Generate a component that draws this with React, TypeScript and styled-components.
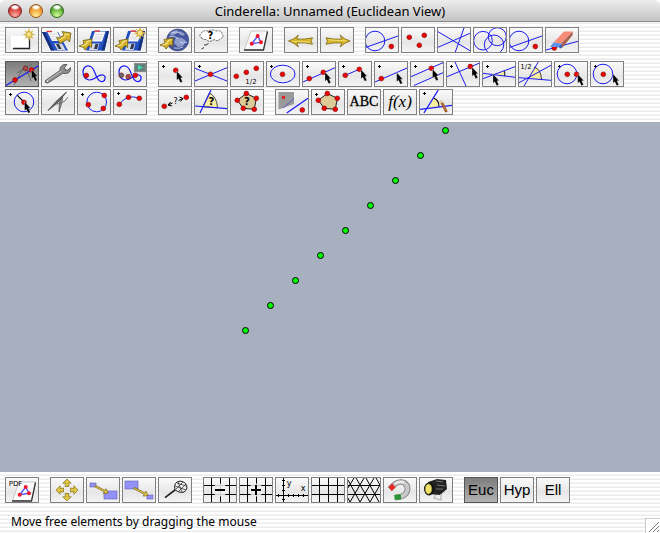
import React from "react";
import styled, { createGlobalStyle, css } from "styled-components";

const GlobalStyle = createGlobalStyle`
  * { box-sizing: border-box; }
  body {
    margin: 0;
    background: #fff;
    color: #000;
    font-family: "Noto Sans", "Open Sans", sans-serif;
  }
`;

const Window = styled.div`
  display: flex;
  flex-direction: column;
  min-height: 100vh;
  background: repeating-linear-gradient(#fff 0 2px, #f4f4f4 2px 3px, #ececec 3px 4px);
`;

const TitleBar = styled.header`
  display: grid;
  grid-template-columns: 1fr auto 1fr;
  align-items: center;
  height: 22px;
  padding: 0 8px;
  border-bottom: 1px solid #8a8a8a;
  border-radius: 6px 6px 0 0;
  background: linear-gradient(#ededed, #c4c4c4);
`;

const Title = styled.h1`
  margin: 0;
  font-size: 13px;
  font-weight: 400;
  line-height: 20px;
  white-space: nowrap;
`;

const Lights = styled.div`
  display: flex;
  gap: 7px;
`;

const Light = styled.button<{ $edge: string; $mid: string; $glow: string }>`
  width: 14px;
  height: 14px;
  padding: 0;
  border: 1px solid ${(p) => p.$edge};
  border-radius: 50%;
  background:
    radial-gradient(ellipse 5px 3px at 50% 18%, #ffff 0 40%, transparent),
    radial-gradient(circle at 50% 90%, ${(p) => p.$glow} 0, ${(p) => p.$mid} 60%, ${(p) => p.$edge} 100%);
`;

const ToolArea = styled.div`
  display: flex;
  flex-direction: column;
  gap: 8px;
  padding: 5px 5px 7px;
`;

const ViewArea = styled(ToolArea)`
  padding-bottom: 8px;
`;

const Rows = styled.div`
  display: flex;
  flex-direction: column;
  gap: 2px;
`;

const ToolRow = styled.div`
  display: flex;
  flex-wrap: wrap;
  gap: 2px 11px;
`;

const Group = styled.div`
  display: flex;
  flex-wrap: wrap;
  gap: 2px;
`;

const Tool = styled.button<{ $on?: boolean }>`
  display: flex;
  align-items: center;
  justify-content: center;
  width: 34px;
  height: 26px;
  padding: 0;
  border: 1px solid #808080;
  overflow: hidden;
  background: linear-gradient(#fafafa, #e6e6e6 60%, #f4f4f4);
  color: #000;
  font-family: "Liberation Sans", Arial, sans-serif;
  font-size: 15px;
  line-height: 24px;
  white-space: nowrap;
  ${(p) =>
    p.$on &&
    css`
      border-color: #555;
      background: linear-gradient(#7c7c7c, #b2b2b2);
    `}
`;

const Formula = styled.span<{ $italic?: boolean }>`
  font-family: "Liberation Serif", "Times New Roman", serif;
  font-size: ${(p) => (p.$italic ? 17 : 14)}px;
  font-style: ${(p) => (p.$italic ? "italic" : "normal")};
  -webkit-text-stroke: ${(p) => (p.$italic ? "0" : "0.3px #000")};
`;

const IconSvg = styled.svg`
  display: block;
  flex: none;
  width: 32px;
  height: 24px;
`;

const Canvas = styled.svg`
  display: block;
  flex: 1 1 240px;
  width: 100%;
  min-height: 240px;
  background: #a8afbe;
`;

const Footer = styled.footer`
  display: flex;
  align-items: flex-end;
  justify-content: space-between;
`;

const Status = styled.p`
  margin: 0;
  padding: 0 11px;
  font-size: 12px;
  line-height: 22px;
`;

const Grip = styled.svg`
  display: block;
  width: 15px;
  height: 15px;
  border-top: 1px solid #ccc;
  border-left: 1px solid #ccc;
  background: #fff;
`;

/* ---------- drawing primitives shared by the tool icons ---------- */

const BLUE = "#1c1cf0";
const SAND = "#dccb96";
const YELLOW = "#f8eea0";

const Dot = ({ x, y, c = "#f00000" }: { x: number; y: number; c?: string }) => (
  <circle cx={x} cy={y} r={2.4} fill={c} stroke="#7a1010" strokeWidth={0.6} />
);

const Plus = ({ y = 5.5 }: { y?: number }) => (
  <path d={`M4 ${y}h3M5.5 ${y - 1.5}v3`} stroke="#000" strokeWidth={1} />
);

const Cursor = ({ x, y }: { x: number; y: number }) => (
  <path
    transform={`translate(${x} ${y})`}
    d="M0 -.5V8.8L1.8 7.2L3.7 11.2L5.8 10.2L4 6.3H6.2Z"
    fill="#000"
    stroke="#fff"
    strokeWidth={0.3}
  />
);

const Line = ({ d, c = BLUE, w = 1 }: { d: string; c?: string; w?: number }) => (
  <path d={d} stroke={c} strokeWidth={w} fill="none" />
);

const Ring = ({ x, y, r = 9.8 }: { x: number; y: number; r?: number }) => (
  <circle cx={x} cy={y} r={r} fill="none" stroke={BLUE} strokeWidth={1} />
);

const Label = ({ x, y, s = 8, children }: { x: number; y: number; s?: number; children: string }) => (
  <text x={x} y={y} fontSize={s} fontWeight={s > 9 ? 700 : 400} textAnchor="middle" fontFamily="DejaVu Sans" fill="#000">
    {children}
  </text>
);

const Gold = ({ t }: { t: string }) => (
  <g transform={t}>
    <path
      d="M-12 -3.2L-10.5 0L-12 3.2Q-4 1.4 3.5 1.9Q3.5 4 2 6Q6 1.8 12 0Q6 -1.8 2 -6Q3.5 -4 3.5 -1.9Q-4 -1.4 -12 -3.2Z"
      fill="#d8b62c"
      stroke="#6e5808"
      strokeWidth={0.7}
    />
    <path d="M-9.5 -1.2Q-2 -.4 8 -.4" stroke="#f5e27a" strokeWidth={0.8} fill="none" />
  </g>
);

const Nugget = ({ t }: { t: string }) => (
  <g transform={t}>
    <path d="M-7 2L-2 0L-3 -3.5L6 -5L5.5 3.5L3 1.5L-1 6L-2.5 3.5Z" fill="#d3b02a" stroke="#675208" strokeWidth={0.7} />
    <path d="M-4.5 2L0 .5L1.5 -2.5L4.5 -3.5" stroke="#f9e98c" strokeWidth={1.1} fill="none" />
  </g>
);

const Disk = () => (
  <g>
    <path d="M15 4H32L27.5 23.500H9Z" fill="#2450c4" />
    <path d="M30 4H32L27.500 23.500H24.500Z" fill="#15307c" />
    <path d="M18 4.500H28.500L25 14.500H14.500Z" fill="#f7f7f7" />
    <path d="M17.500 4H23" stroke="#e22828" strokeWidth={1.3} />
    <path d="M18.500 7.500H26M17.500 10H25M16.500 12H24" stroke="#c4c8d4" strokeWidth={0.6} />
    <path d="M14 16.500H22.500L20.500 23H12Z" fill="#d4d8e0" />
    <path d="M18.500 17H21.500L20 22H17Z" fill="#30384e" />
  </g>
);

const Star = ({ x, y }: { x: number; y: number }) => (
  <g transform={`translate(${x} ${y})`}>
    <path
      d="M0 -7L1.3 -2.6L4.6 -4.6L2.7 -1.3L6.5 0L2.7 1.3L4.6 4.6L1.3 2.7L0 7L-1.3 2.7L-4.6 4.6L-2.7 1.3L-6.5 0L-2.7 -1.3L-4.6 -4.6L-1.3 -2.6Z"
      fill="#dcb74a"
    />
    <circle r={2.8} fill="#f4df83" stroke="#b08e25" strokeWidth={0.5} />
  </g>
);

const CORNERS = [[18.7, 9], [22, 15.3], [12.7, 16.7]];

const Paper = () => (
  <g>
    <path d="M12 4H28.5L24.5 22.5H5.5Z" fill="#fafafa" stroke="#999" strokeWidth={0.5} />
    <path d="M28.5 4.5L24.5 23H5" fill="none" stroke="#333" strokeWidth={1.3} />
    <path d="M18.7 9L22 15.3L12.7 16.7Z" fill="none" stroke="#5454f4" strokeWidth={1.4} />
    {CORNERS.map(([x, y]) => (
      <circle key={x} cx={x} cy={y} r={2} fill="#f5162c" />
    ))}
  </g>
);

const PENTA = [[16.3, 4.5], [26.3, 9.3], [24.3, 20.3], [13.3, 19.3], [7.3, 11.3]];

const Pentagon = () => (
  <g>
    <polygon points={PENTA.map((p) => p.join()).join(" ")} fill={SAND} stroke="#222" strokeWidth={1} />
    {PENTA.map(([x, y]) => (
      <Dot key={x} x={x} y={y} />
    ))}
  </g>
);

const CircleLine = () => (
  <g>
    <Ring x={10} y={14} />
    <Line d="M1 20.3L33 9" />
    <Dot x={26.3} y={19.5} />
  </g>
);

const Curve = () => (
  <Line w={1.2} d="M6 11C6 6 10 4 13.5 5.5C19 8 18 19 24 20.500C28.500 21 29.500 15 26 14C21 13 18 19.500 12 19C8 18 6 15 6 11Z" />
);

const Grid = ({ faded }: { faded?: boolean }) => (
  <g>
    <path d="M8.5 1V25M17.5 1V25M26.5 1V25M1 8.5H33M1 17.5H33" stroke="#000" strokeWidth={1} />
    {faded && <ellipse cx={17} cy={13} rx={7.5} ry={6.5} fill="#efefef" opacity={0.85} />}
  </g>
);

const Arm = ({ a }: { a: number }) => (
  <path
    transform={`rotate(${a} 17 13)`}
    d="M17 2L21.2 6.2H18.4L19 9.5H15L15.6 6.2H12.8Z"
    fill="#e2c842"
    stroke="#84701a"
    strokeWidth={0.7}
  />
);

const Box = ({ x, y, w, h }: { x: number; y: number; w: number; h: number }) => (
  <rect x={x} y={y} width={w} height={h} fill="#9292fa" stroke="#5f5fae" strokeWidth={0.6} />
);

const Pointer = ({ t, n }: { t: string; n: number }) => (
  <path transform={t} d={`M0 -.8H${n - 4}V-2.8L${n} 0L${n - 4} 2.8V.8H0Z`} fill="#e6c63a" stroke="#72601a" strokeWidth={0.6} />
);

const icons: Record<string, React.ReactNode> = {
  "New construction": (
    <g>
      <rect x={6} y={9} width={19} height={12} fill="#fff" />
      <path d="M8 21.5H24.5V11" stroke="#222" strokeWidth={1.3} fill="none" />
      <Star x={24} y={7.5} />
    </g>
  ),
  Load: (
    <g>
      <path d="M1 5H17L27 23.5H10Z" fill="#2450c4" />
      <path d="M1 5L4 5L13 23.5H10Z" fill="#15307c" />
      <path d="M6 4.5H16L21 14H11Z" fill="#f7f7f7" />
      <path d="M5.5 4.5H11" stroke="#e22828" strokeWidth={1.3} />
      <path d="M8 7H16M9.500 9.500H17M11 12H18" stroke="#c4c8d4" strokeWidth={0.6} />
      <path d="M13 16.500H21L24.500 23H16.500Z" fill="#d4d8e0" />
      <path d="M15 17H18L20.500 22H17.500Z" fill="#30384e" />
      <path d="M15.500 10.500L18 11L23 8L21 4.500L30 6L28.500 15L26 12.500L19 16.500Z" fill="#d3b02a" stroke="#675208" strokeWidth={0.7} />
      <path d="M18.500 13L24 9.800L24 7L28 7.500" stroke="#f9e98c" strokeWidth={1} fill="none" />
    </g>
  ),
  Save: (
    <g>
      <Disk />
      <Nugget t="translate(9 17)" />
    </g>
  ),
  "Save as": (
    <g>
      <Disk />
      <Star x={27} y={6} />
      <Nugget t="translate(9 17)" />
    </g>
  ),
  "Export to web": (
    <g>
      <circle cx={19.7} cy={13} r={11} fill="#46569c" stroke="#34407c" strokeWidth={0.6} />
      <path d="M12 6Q16 2 21 4L18 7L13 9ZM22 4L27 7L25 9L21 7ZM18 10L24 11L28 14L25 19L20 20L16 16Z" fill="#8f9dcc" />
      <path d="M11 10Q17 8 20 12M22 15Q25 17 29 15M16 21Q21 22 25 20M14 6Q18 4 22 6" stroke="#d8def0" strokeWidth={0.8} fill="none" />
      <Nugget t="translate(9 16)" />
    </g>
  ),
  Help: (
    <g>
      <path
        d="M8 11Q4 9 7.5 6Q9 3 14 4Q18 2 22 4Q28 3 28 7Q31 10 26 12Q24 15 20 12.5Q15 16 12 12.5Q9 13 8 11Z"
        fill="#fff"
        stroke="#333"
        strokeWidth={0.8}
        strokeDasharray="2 1"
      />
      <path d="M14.5 16.500L12 18L10 18" fill="none" stroke="#333" strokeWidth={1} />
      <path d="M10 20.500L7.500 22" stroke="#333" strokeWidth={1} />
      <Label x={16.5} y={12.3} s={10}>?</Label>
    </g>
  ),
  "Open view": <Paper />,
  Undo: <Gold t="translate(16.5 14) rotate(180)" />,
  Redo: <Gold t="translate(18 14)" />,
  "Select all": <CircleLine />,
  "Select points": (
    <g>
      <Dot x={8.3} y={10.3} />
      <Dot x={23.3} y={8.3} />
      <Dot x={18.3} y={18.3} />
    </g>
  ),
  "Select lines": <Line d="M1 4.7L33 23.7M1 20.3L33 6.3M27 1L18.3 25" />,
  "Select conics": (
    <g>
      <Ring x={10} y={13.7} r={9.3} />
      <Ring x={21} y={17.7} r={9.7} />
      <Ring x={24.3} y={9.7} r={9} />
    </g>
  ),
  Deselect: <CircleLine />,
  Delete: (
    <g>
      <Line d="M1 23L33 14.3" />
      <Dot x={9.3} y={21} />
      <path d="M19 4.5H27.7L16.5 16.5L8.5 15.5Z" fill="#f58c78" />
      <path d="M27.7 4.5V8L17.5 20.5L16.5 16.5Z" fill="#a8604e" />
      <path d="M8.5 15.5L16.5 16.5L14 20H5Z" fill="#5f92ea" />
      <path d="M16.5 16.5L17.5 20.5L15 21.5L14 20Z" fill="#3c5fa8" />
    </g>
  ),
  Move: (
    <g>
      <Line c="#666" d="M9 24L20 4L26 20M12 12L27 3" />
      <Line w={1.2} d="M1 24.5L33 5" />
      <Dot x={20.5} y={7.5} c="#a04c4c" />
      <Dot x={10} y={19} />
      <Dot x={26.5} y={9} />
      <Cursor x={26.5} y={9} />
    </g>
  ),
  Inspect: (
    <g>
      <path
        d="M4.5 19.5L19 9.5Q18.5 5 23 3.5L26 3.5L23.5 6.5L24.5 9L27 9L29.5 6.5Q30 12 25 12.5L21.5 12.5L7 22Q3.5 22.5 4.5 19.5Z"
        fill="#8d8d8d"
        stroke="#4b4b4b"
        strokeWidth={0.8}
      />
      <path d="M6 19.8L20.5 10" stroke="#c9c9c9" strokeWidth={0.9} />
      <circle cx={6.5} cy={20.3} r={0.8} fill="#eee" />
    </g>
  ),
  Locus: (
    <g>
      <Curve />
      <Dot x={9.3} y={14.5} />
    </g>
  ),
  Animation: (
    <g>
      <Curve />
      <Dot x={8.3} y={14.3} c="#666" />
      <Dot x={15.3} y={15.7} c="#a84848" />
      <Dot x={22.3} y={14.3} />
      <rect x={21.3} y={2.3} width={11.5} height={8.5} fill="#64807c" stroke="#888" strokeWidth={0.7} />
      <path d="M25 4L30 6.5L25 9Z" fill="#3edfb0" />
    </g>
  ),
  "Add a point": (
    <g>
      <Plus />
      <Dot x={17.7} y={9.3} />
      <Cursor x={18.7} y={10.5} />
    </g>
  ),
  Intersection: (
    <g>
      <Plus />
      <Line d="M1 7.3L33 20M1 20L33 6.7" />
      <Dot x={16.5} y={13.3} />
    </g>
  ),
  "Mid-point": (
    <g>
      <Dot x={6.3} y={15.3} />
      <Dot x={16.3} y={11.3} />
      <Dot x={26.3} y={7.3} />
      <Label x={21} y={22.8} s={7}>1/2</Label>
    </g>
  ),
  Center: (
    <g>
      <Plus />
      <ellipse cx={16.7} cy={13} rx={12.3} ry={8.8} fill="none" stroke={BLUE} />
      <Dot x={16.5} y={13.3} />
    </g>
  ),
  Line: (
    <g>
      <Plus />
      <Line d="M1 21L33 6.7" />
      <Dot x={7.3} y={17.6} />
      <Dot x={21.3} y={11.3} />
      <Cursor x={23} y={11.5} />
    </g>
  ),
  Segment: (
    <g>
      <Plus />
      <Line d="M7.3 14.3L21.3 8.3" />
      <Dot x={7.3} y={14.3} />
      <Dot x={21.3} y={8.3} />
      <Cursor x={23} y={9} />
    </g>
  ),
  "Line through point": (
    <g>
      <Plus />
      <Line d="M1 21L33 7" />
      <Dot x={7.3} y={17.6} />
      <Cursor x={22.7} y={12} />
    </g>
  ),
  Parallel: (
    <g>
      <Plus />
      <Line d="M1 15.7L33 1.7M4 24.5L33 11.7" />
      <Dot x={21.3} y={7.3} />
      <Cursor x={22.5} y={8.5} />
    </g>
  ),
  Orthogonal: (
    <g>
      <Plus />
      <Line d="M1 15.7L33 2.3M9 1L20 25" />
      <Dot x={24.3} y={5.5} />
      <Cursor x={26} y={6.5} />
    </g>
  ),
  "Line with slope": (
    <g>
      <Plus />
      <path d="M12 13.5L22 9.8Q23.5 12 22.5 15Z" fill={YELLOW} />
      <path d="M22 9.8Q23.5 12 22.5 15" fill="none" stroke="#000" strokeWidth={1} />
      <Line d="M1 17.7L33 5.7M1 12.3L33 16.3" />
      <Cursor x={11} y={13.5} />
    </g>
  ),
  "Angular bisector": (
    <g>
      <path d="M9.3 17.3L16 6Q23 8 23.5 18.5Z" fill={YELLOW} />
      <path d="M16 6Q23 8 23.5 18.5" fill="none" stroke="#222" strokeWidth={0.9} />
      <Line d="M1 16.7L33 19.3M1 21.7L33 4.3M6 25L20.3 1" />
      <Label x={8} y={7.8} s={7}>1/2</Label>
    </g>
  ),
  Circle: (
    <g>
      <Plus />
      <Ring x={13} y={13} />
      <Dot x={13.3} y={13.3} />
      <Dot x={22.5} y={13.3} />
      <Cursor x={23.7} y={13.5} />
    </g>
  ),
  "Circle by radius": (
    <g>
      <Plus />
      <Ring x={13} y={13} />
      <Dot x={13.3} y={13.3} />
      <Cursor x={23} y={13.5} />
    </g>
  ),
  "Fixed radius circle": (
    <g>
      <Plus />
      <Ring x={19} y={13} />
      <Line c="#000" d="M12.3 6.3L19 13" w={1.2} />
      <Dot x={19} y={13.3} />
      <Cursor x={19.5} y={13} />
    </g>
  ),
  Compass: (
    <g>
      <path d="M25.5 3L17 13.5L7 21.5L15 12.5Z" fill="#666" stroke="#444" strokeWidth={0.8} />
      <path d="M21.5 8L21 13L18 23L18.5 13Z" fill="#999" stroke="#444" strokeWidth={0.7} />
      <path d="M13 15Q18 16 24 12L27 8" stroke="#666" strokeWidth={0.9} fill="none" />
    </g>
  ),
  "Circle by three points": (
    <g>
      <Plus />
      <Ring x={19.7} y={13} />
      <Dot x={11.3} y={15.7} />
      <Dot x={27.3} y={6.5} />
      <Dot x={26.3} y={19.5} />
    </g>
  ),
  Arc: (
    <g>
      <Plus y={4.5} />
      <Line d="M6.3 15.3Q14 4.500 26.3 9.3" />
      <Dot x={6.3} y={15.3} />
      <Dot x={15.5} y={8.3} />
      <Dot x={26.3} y={9.3} />
    </g>
  ),
  "Measure distance": (
    <g>
      <Dot x={6.3} y={17.3} />
      <Dot x={28.3} y={8.3} />
      <path
        d="M12.5 13L10 16L14 17M10 16L14.5 14M21.5 8L25 9.5L22.500 12.500M25 9.5L20.5 11.500"
        stroke="#000"
        strokeWidth={1}
        fill="none"
      />
      <Label x={17.5} y={15} s={8}>?</Label>
    </g>
  ),
  "Measure angle": (
    <g>
      <path d="M9 17.7L15.5 4Q23 8 23.5 18.7Z" fill={YELLOW} stroke="#222" strokeWidth={0.8} />
      <Line d="M1 17L33 19.7M6 24L17 1" w={1.2} />
      <Label x={17.3} y={16} s={10}>?</Label>
    </g>
  ),
  "Measure area": (
    <g>
      <Pentagon />
      <Label x={17} y={16} s={10}>?</Label>
    </g>
  ),
  Reflection: (
    <g>
      <path d="M3.5 3H19V15L3.5 20.5Z" fill="#9a9a9a" />
      <rect x={7} y={7} width={3} height={3} fill="#e42222" />
      <Line d="M8 19L19 9.5" c="#5959c4" />
      <Line d="M11.7 24L33 9.3" w={1.2} />
      <Dot x={27.3} y={21} />
    </g>
  ),
  Polygon: (
    <g>
      <Plus />
      <Pentagon />
    </g>
  ),
  Decorate: (
    <g>
      <Plus y={4.5} />
      <path d="M10.3 18.7L14.5 9Q20 11 20 17.7Z" fill={YELLOW} />
      <path d="M14.5 9Q20 11 20 17.7" fill="none" stroke="#000" strokeWidth={1.1} />
      <Line d="M1 20.3L33 16.3M5 24L19.3 1" w={1.3} />
      <path d="M21 12L23.5 15" stroke="#d8c9a0" strokeWidth={3} />
      <path d="M23 14L27.5 23" stroke="#9a4e1c" strokeWidth={2.6} />
      <path d="M23.5 14.5L27 22" stroke="#d58b4c" strokeWidth={0.8} />
    </g>
  ),
  "Export PDF": (
    <g>
      <g transform="translate(2 1)">
        <Paper />
      </g>
      <Label x={10.5} y={9} s={7}>PDF</Label>
    </g>
  ),
  "Translate view": (
    <g>
      {[0, 90, 180, 270].map((a) => (
        <Arm key={a} a={a} />
      ))}
    </g>
  ),
  "Zoom in": (
    <g>
      <Box x={4} y={6} w={6} h={4} />
      <Box x={18} y={14} w={13} h={8} />
      <Pointer t="translate(9 9) rotate(28)" n={15} />
    </g>
  ),
  "Zoom out": (
    <g>
      <Box x={3} y={4} w={13} h={8} />
      <Box x={25} y={18} w={6} h={4} />
      <Pointer t="translate(12 11) rotate(28)" n={16} />
    </g>
  ),
  "View all points": (
    <g fill="none" stroke="#222">
      <path d="M7 20.7L17 13" strokeWidth={1.6} />
      <path d="M17 13Q15 5 22 4Q29 5 29 11Q27 17 21 15L17 13" strokeWidth={1} />
      <path d="M17 9L28 13M19 6L28 9M18 12L25 5M21 14L28 7M20 5L24 15" strokeWidth={0.7} />
    </g>
  ),
  "Coarser grid": (
    <g>
      <Grid faded />
      <path d="M12 13H22" stroke="#000" strokeWidth={2} />
    </g>
  ),
  "Denser grid": (
    <g>
      <Grid faded />
      <path d="M12 13H22M17 8V18" stroke="#000" strokeWidth={2} />
    </g>
  ),
  "Toggle axes": (
    <g>
      <path
        d="M8.5 1V25M1 18.5H33M7 3.5H10M7 8.5H10M7 13.5H10M7 22.5H10M3.5 17V20M13.5 17V20M18.5 17V20M23.5 17V20M28.5 17V20"
        stroke="#000"
      />
      <Label x={14} y={9} s={8}>y</Label>
      <Label x={28} y={14} s={8}>x</Label>
    </g>
  ),
  "Euclidean grid": <Grid />,
  "Triangular grid": (
    <path
      d="M1 8.5H33M1 17.5H33M1 3L13 25M9 1L23 25M19 1L32 25M29 1L33 8M1 21L3 25M7 1L1 11M17 1L3 25M27 1L13 25M33 8L23 25"
      stroke="#000"
      strokeWidth={1}
    />
  ),
  "Snap to grid": (
    <g fill="none">
      <path d="M7 12Q14 3 21 5.5Q27 10 23 16.5Q19 20.5 12 20.5" stroke="#777" strokeWidth={5.5} />
      <path d="M7 12Q14 3 21 5.5Q27 10 23 16.5Q19 20.5 12 20.5" stroke="#c9c9c9" strokeWidth={4} />
      <path d="M12 6.5Q17 3.5 21 5.5" stroke="#f6f6f6" strokeWidth={1.5} />
      <path d="M7 12L11 8.5" stroke="#e52a2a" strokeWidth={5} />
      <path d="M11.5 20.5L18 19.7" stroke="#2b9333" strokeWidth={5} />
    </g>
  ),
  Lighting: (
    <g>
      <path d="M9 5L18 2L27 3L28 12L21 18L9 17Z" fill="#222" />
      <ellipse cx={10} cy={12} rx={5} ry={6.5} fill="#111" />
      <ellipse cx={9.5} cy={12} rx={3.2} ry={5} fill="#efe16a" stroke="#a89c35" strokeWidth={0.7} />
      <path d="M17 4L24 5M18 8L26 9M17 12L24 12" stroke="#8b8b8b" strokeWidth={0.8} />
      <path d="M17 18L15 21L22 23V17" fill="none" stroke="#b8b8b8" strokeWidth={1.3} />
    </g>
  ),
};

const captions: Record<string, React.ReactNode> = {
  Text: <Formula>ABC</Formula>,
  Function: <Formula $italic>f(x)</Formula>,
  "Euclidean view": "Euc",
  "Hyperbolic view": "Hyp",
  "Elliptic view": "Ell",
};

const fileRow = [
  ["New construction", "Load", "Save", "Save as"],
  ["Export to web", "Help"],
  ["Open view"],
  ["Undo", "Redo"],
  ["Select all", "Select points", "Select lines", "Select conics", "Deselect", "Delete"],
];

const modeRows = [
  [
    ["Move", "Inspect", "Locus", "Animation"],
    [
      "Add a point", "Intersection", "Mid-point", "Center", "Line", "Segment", "Line through point",
      "Parallel", "Orthogonal", "Line with slope", "Angular bisector", "Circle", "Circle by radius",
    ],
  ],
  [
    ["Fixed radius circle", "Compass", "Circle by three points", "Arc"],
    ["Measure distance", "Measure angle", "Measure area"],
    ["Reflection", "Polygon", "Text", "Function", "Decorate"],
  ],
];

const viewRow = [
  ["Export PDF"],
  ["Translate view", "Zoom in", "Zoom out", "View all points"],
  ["Coarser grid", "Denser grid", "Toggle axes", "Euclidean grid", "Triangular grid", "Snap to grid", "Lighting"],
  ["Euclidean view", "Hyperbolic view", "Elliptic view"],
];

const active = new Set(["Move", "Euclidean view"]);

const points = Array.from({ length: 9 }, (_, i) => ({ x: 245.5 + 25 * i, y: 208.5 - 25 * i }));

const ToolGroups = ({ groups }: { groups: string[][] }) => (
  <ToolRow>
    {groups.map((names) => (
      <Group key={names[0]}>
        {names.map((name) => (
          <Tool key={name} type="button" aria-label={name} aria-pressed={active.has(name)} $on={active.has(name)}>
            {captions[name] ?? <IconSvg viewBox="1 1 32 24">{icons[name]}</IconSvg>}
          </Tool>
        ))}
      </Group>
    ))}
  </ToolRow>
);

export default function App() {
  return (
    <Window>
      <GlobalStyle />
      <TitleBar>
        <Lights>
          <Light type="button" aria-label="Close" $edge="#7c2222" $mid="#d8403c" $glow="#ffb0a8" />
          <Light type="button" aria-label="Minimize" $edge="#96561a" $mid="#f09a2c" $glow="#fff09a" />
          <Light type="button" aria-label="Zoom window" $edge="#2c661c" $mid="#5fae34" $glow="#d4ff9c" />
        </Lights>
        <Title>Cinderella: Unnamed (Euclidean View)</Title>
      </TitleBar>
      <ToolArea>
        <ToolGroups groups={fileRow} />
        <Rows>
          {modeRows.map((groups) => (
            <ToolGroups key={groups[0][0]} groups={groups} />
          ))}
        </Rows>
      </ToolArea>
      <Canvas role="img" aria-label="Construction with nine free points">
        {points.map((p) => (
          <circle key={p.x} cx={p.x} cy={p.y} r={3} fill="#00ff00" stroke="#000" strokeWidth={1} />
        ))}
      </Canvas>
      <ViewArea>
        <ToolGroups groups={viewRow} />
      </ViewArea>
      <Footer>
        <Status>Move free elements by dragging the mouse</Status>
        <Grip viewBox="0 0 14 14" aria-hidden="true">
          <path d="M3 13L13 3M7 13L13 7M11 13L13 11" stroke="#777" strokeWidth={1} />
        </Grip>
      </Footer>
    </Window>
  );
}
